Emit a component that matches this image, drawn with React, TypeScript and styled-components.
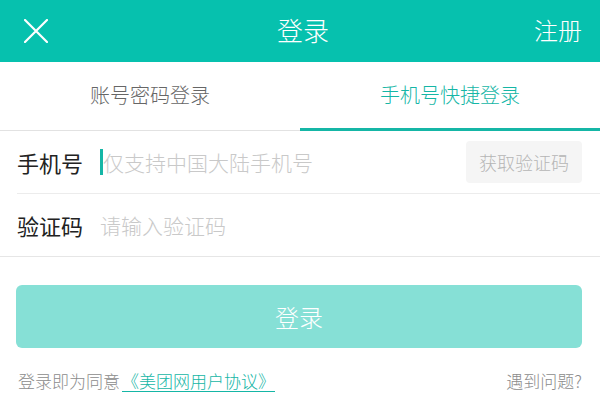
import styled, { createGlobalStyle } from 'styled-components'

const GlobalStyle = createGlobalStyle`
  html, body {
    margin: 0;
    padding: 0;
    background: #fff;
  }
  body {
    font-family: "Noto Sans CJK SC", "Noto Sans", sans-serif;
    font-weight: 300;
  }
`

const Page = styled.div`
  width: 600px;
  height: 400px;
  display: flex;
  flex-direction: column;
  background: #fff;
  overflow: hidden;
`

const Header = styled.div`
  height: 62px;
  background-color: #06c1ae;
  display: grid;
  grid-template-columns: 1fr auto 1fr;
  align-items: center;
  padding: 0 18px 0 24px;
  color: #fff;
`

const CloseButton = styled.div`
  width: 24px;
  height: 24px;
  display: flex;
  align-items: center;
`

const HeaderTitle = styled.div`
  font-size: 26px;
  line-height: 1;
  margin-top: -2px;
`

const HeaderAction = styled.div`
  justify-self: end;
  font-size: 24px;
  line-height: 1;
  margin-top: -2px;
`

const Tabs = styled.div`
  height: 68px;
  display: flex;
  border-bottom: 1px solid #e2e2e2;
`

const Tab = styled.div<{ $active?: boolean }>`
  flex: 1;
  display: flex;
  align-items: center;
  justify-content: center;
  font-size: 20px;
  color: ${(p) => (p.$active ? '#15b6a6' : '#666')};
  box-shadow: ${(p) => (p.$active ? 'inset 0 -3px 0 #15b6a6' : 'none')};
  margin-bottom: ${(p) => (p.$active ? '-1px' : '0')};
  padding-bottom: 4px;
`

const Form = styled.div`
  border-bottom: 1px solid #e6e6e6;
`

const Row = styled.div<{ $divider?: boolean }>`
  height: 62px;
  margin-left: 17px;
  padding-right: 18px;
  display: flex;
  align-items: center;
  border-bottom: ${(p) => (p.$divider ? '1px solid #ececec' : 'none')};
`

const Label = styled.div`
  width: 83px;
  font-size: 22px;
  font-weight: 400;
  color: #222;
  flex-shrink: 0;
`

const Field = styled.div`
  flex: 1;
  display: flex;
  align-items: center;
  font-size: 21px;
  color: #c9c9c9;
`

const Caret = styled.span`
  width: 3px;
  height: 26px;
  background: #15b6a6;
`

const CodeButton = styled.div`
  width: 116px;
  height: 42px;
  border-radius: 4px;
  background: #f5f5f5;
  color: #b5b5b5;
  font-size: 18px;
  display: flex;
  align-items: center;
  justify-content: center;
`

const Actions = styled.div`
  padding: 28px 18px 0 16px;
`

const LoginButton = styled.div`
  height: 63px;
  border-radius: 6px;
  background: #86e0d6;
  color: #fff;
  font-size: 24px;
  display: flex;
  align-items: center;
  justify-content: center;
`

const Footer = styled.div`
  display: flex;
  justify-content: space-between;
  align-items: center;
  padding: 20px 18px 0 18px;
  font-size: 17px;
  color: #8c8c8c;
`

const Agreement = styled.div`
  display: flex;
  align-items: center;
`

const Link = styled.span`
  color: #15b6a6;
  text-decoration: underline;
  text-underline-offset: 3px;
  padding: 0 3px 0 2px;
`

const Help = styled.span`
  color: #8c8c8c;
`

function CloseIcon() {
  return (
    <svg width='24' height='24' viewBox='0 0 24 24'>
      <path d='M1 1 L23 23 M23 1 L1 23' stroke='#fff' strokeWidth='2.2' strokeLinecap='round' />
    </svg>
  )
}

function App() {
  return (
    <>
      <GlobalStyle />
      <Page>
        <Header>
          <CloseButton>
            <CloseIcon />
          </CloseButton>
          <HeaderTitle>登录</HeaderTitle>
          <HeaderAction>注册</HeaderAction>
        </Header>
        <Tabs>
          <Tab>账号密码登录</Tab>
          <Tab $active>手机号快捷登录</Tab>
        </Tabs>
        <Form>
          <Row $divider>
            <Label>手机号</Label>
            <Field>
              <Caret />
              仅支持中国大陆手机号
            </Field>
            <CodeButton>获取验证码</CodeButton>
          </Row>
          <Row>
            <Label>验证码</Label>
            <Field>请输入验证码</Field>
          </Row>
        </Form>
        <Actions>
          <LoginButton>登录</LoginButton>
        </Actions>
        <Footer>
          <Agreement>
            登录即为同意<Link>《美团网用户协议》</Link>
          </Agreement>
          <Help>遇到问题?</Help>
        </Footer>
      </Page>
    </>
  )
}

export default App
